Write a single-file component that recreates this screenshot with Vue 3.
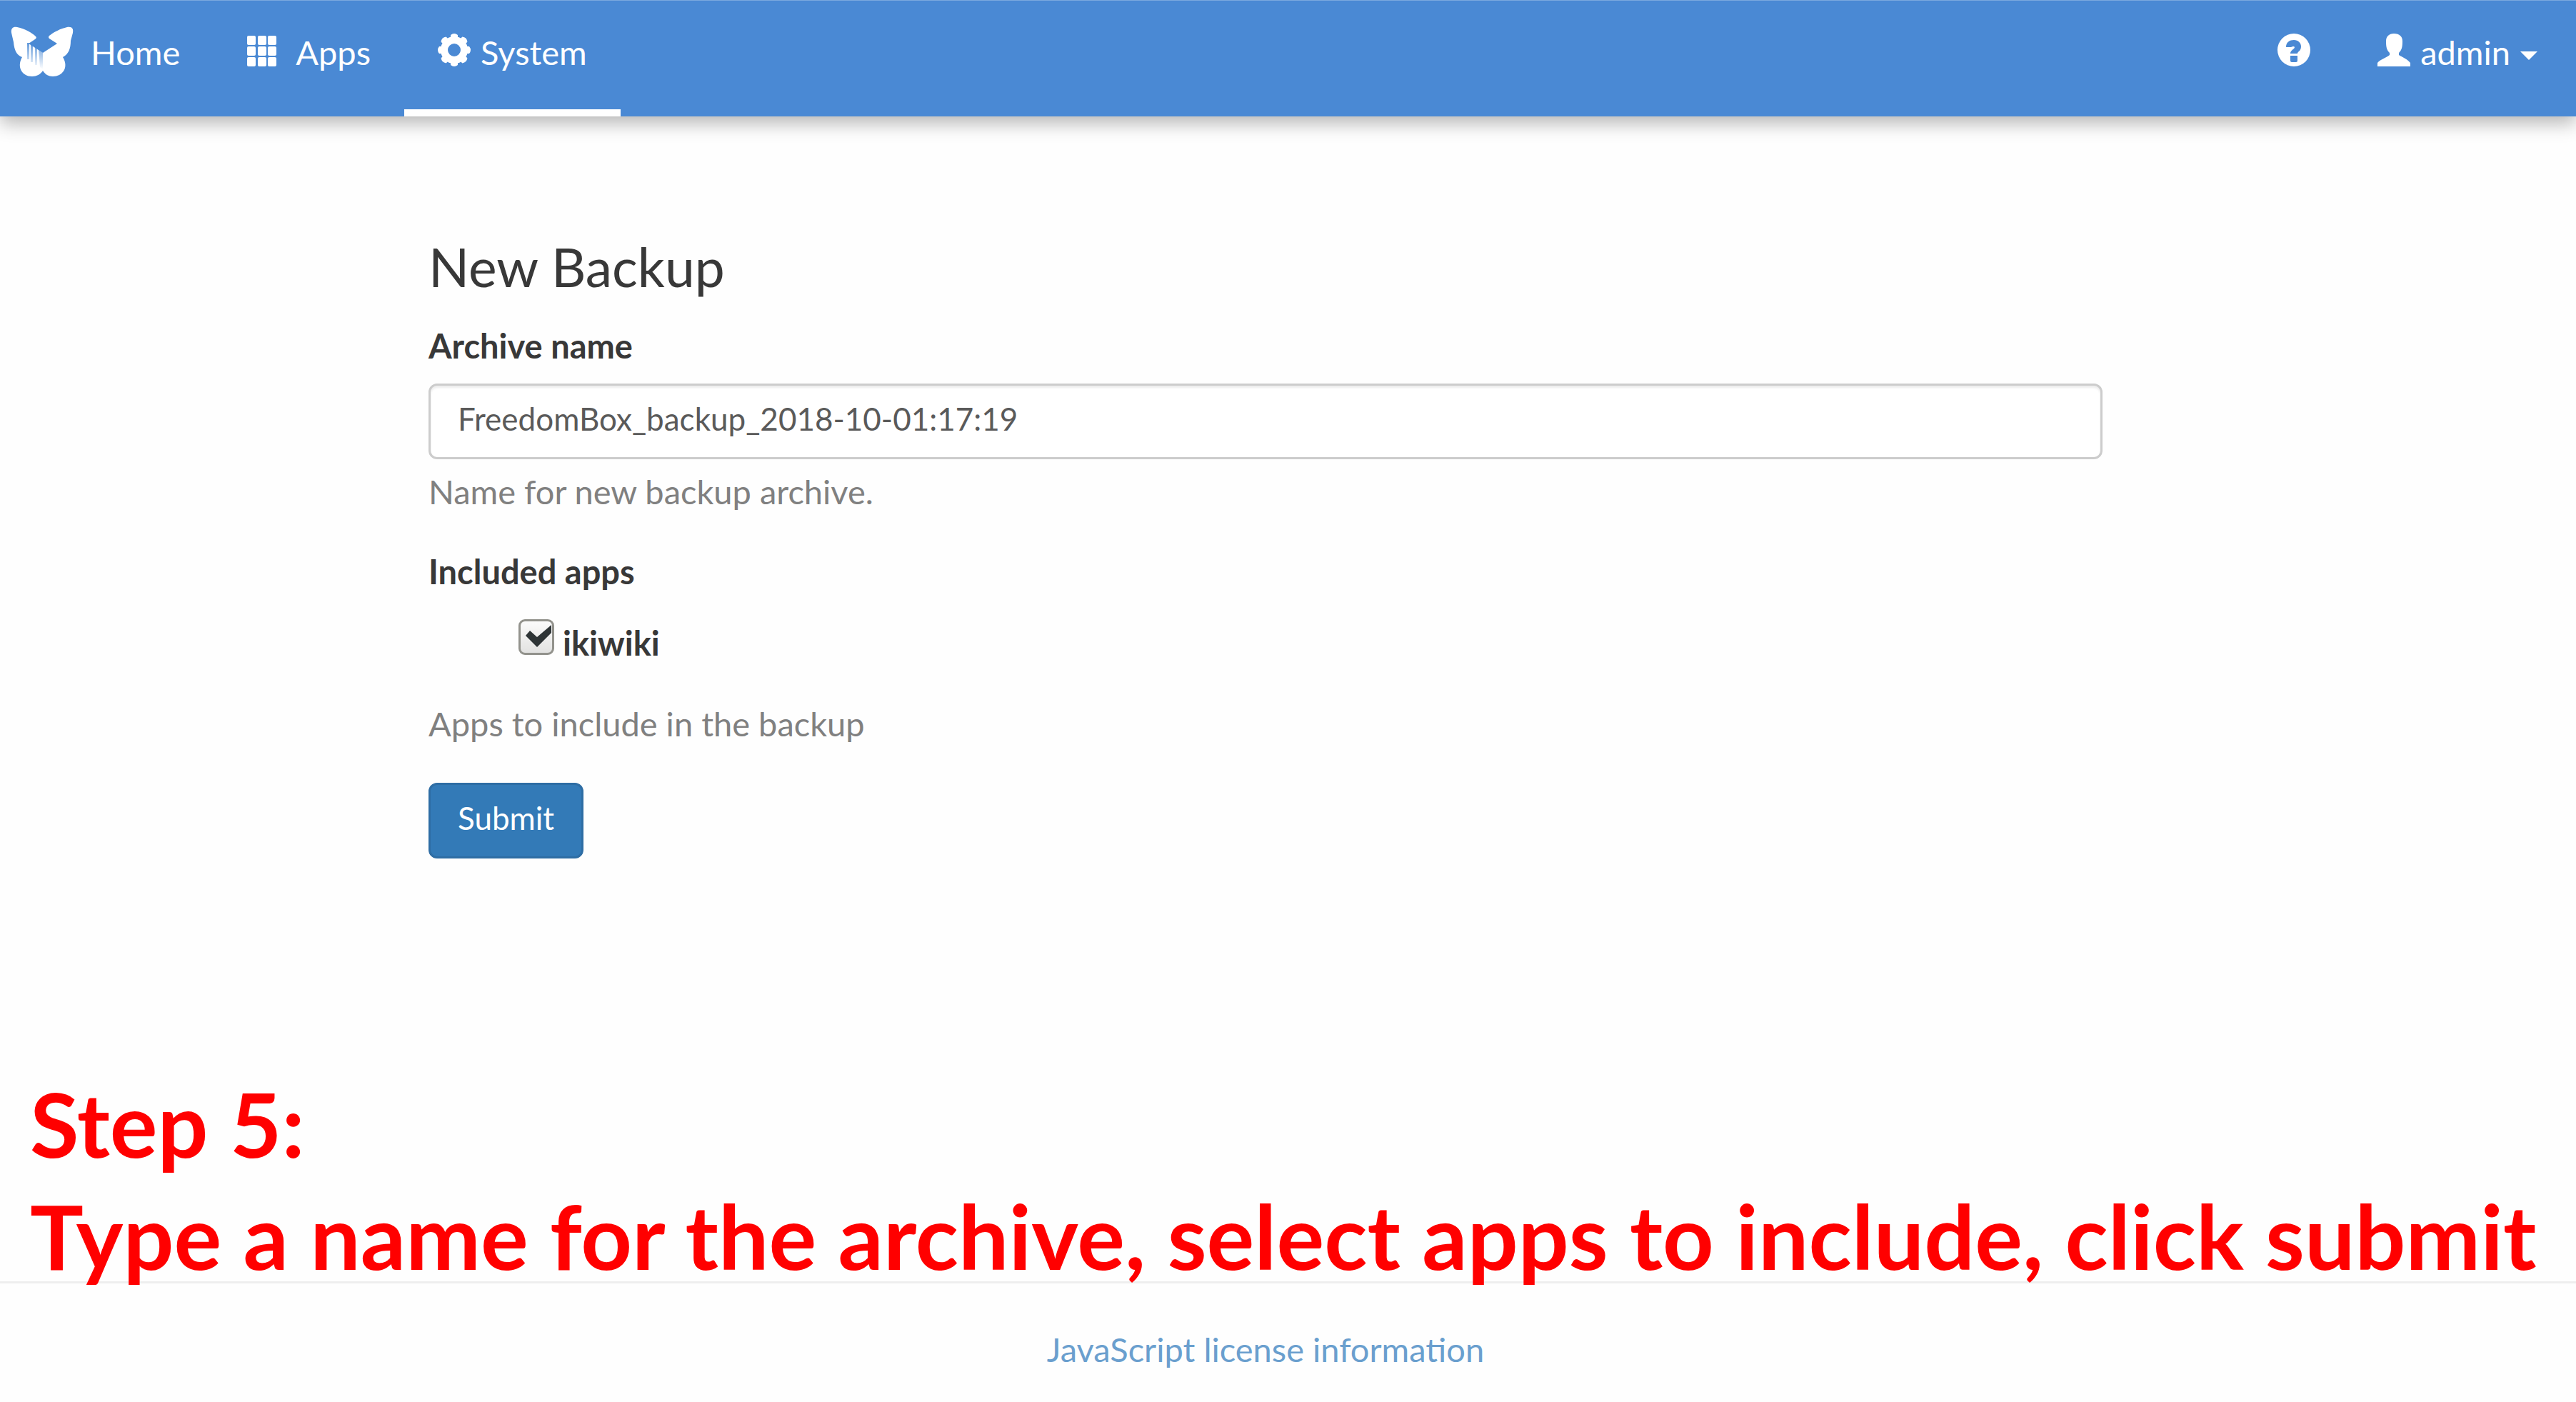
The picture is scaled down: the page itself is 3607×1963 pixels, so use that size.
<script setup>
import { ref } from 'vue'

const archiveName = ref('FreedomBox_backup_2018-10-01:17:19')
const apps = ref([{ id: 'ikiwiki', selected: true }])
const gearTeeth = [0, 45, 90, 135, 180, 225, 270, 315]
const gridCells = [3, 18, 33].flatMap((y) => [0, 15, 29].map((x) => ({ x, y })))
</script>

<template>
  <div class="page">
    <nav class="navbar" aria-label="Main">
      <a class="brand" href="#home">
        <svg class="logo" viewBox="0 0 88 72" aria-hidden="true">
          <defs>
            <linearGradient id="fade" x1="0" y1="0" x2="0" y2="1">
              <stop offset="0" stop-color="#4a89d4" stop-opacity="0.85" />
              <stop offset="1" stop-color="#4a89d4" stop-opacity="0" />
            </linearGradient>
          </defs>
          <path fill="#fff" d="M1 9C0 2 4 0 9 1C20 3 30 9 35 14Q37 16 34 18L25 24L45 37L65 24L54 17Q52 15 54 13C60 8 70 3 79 1C86 0 88 3 87 9L84 20C84 31 81 39 73 43C82 58 72 70 59 70C53 70 48 67 45 62C42 67 36 70 30 70C16 70 8 57 16 43C8 40 5 33 4 22Z" />
          <path fill="url(#fade)" d="M23 23H26V46H23ZM28 26H31V50H28ZM34 29L37 31V54H34ZM39 33L45 37V60L41 57Z" />
        </svg>
        <span>Home</span>
      </a>
      <a class="link" href="#apps">
        <svg class="icon grid-icon" viewBox="0 0 46 46" aria-hidden="true">
          <rect v-for="(c, i) in gridCells" :key="i" :x="c.x" :y="c.y" width="12" height="13" rx="2" fill="#fff" />
        </svg>
        <span>Apps</span>
      </a>
      <a class="link active" href="#system" aria-current="page">
        <svg class="icon" viewBox="0 0 46 46" aria-hidden="true">
          <circle cx="23" cy="23" r="14" fill="none" stroke="#fff" stroke-width="10" />
          <path v-for="a in gearTeeth" :key="a" fill="#fff" d="M15 9L18 5V2Q23-2 28 2V5L31 9Z" :transform="`rotate(${a} 23 23)`" />
        </svg>
        <span>System</span>
      </a>
      <a class="link push" href="#help" aria-label="Help">
        <svg class="icon" viewBox="0 0 46 46" aria-hidden="true">
          <circle cx="23" cy="23" r="23" fill="#fff" />
          <path fill="#4a89d4" d="M12 19C12 12 17 9 23 9C29 9 33 13 33 18C33 25 28 25 28 28H18C18 23 24 22 24 19Q23 17 19 19ZM18 31h10v7q0 2-2 2h-6q-2 0-2-2Z" />
        </svg>
      </a>
      <button class="link" type="button" aria-haspopup="true">
        <svg class="icon" viewBox="0 0 46 46" aria-hidden="true">
          <path fill="#fff" d="M23 0C31 0 35 4 35 11C35 19 34 23 30 27V30C35 33 42 36 46 41V46H0V41C4 36 12 34 17 30V27C13 23 12 19 12 11C12 4 16 0 23 0Z" />
        </svg>
        <span>admin</span>
        <svg class="caret" viewBox="0 0 24 12" aria-hidden="true"><path fill="#fff" d="M0 0H24L12 12Z" /></svg>
      </button>
    </nav>

    <main class="content">
      <div class="column">
        <h2>New Backup</h2>
        <form @submit.prevent>
          <label class="label" for="archive-name">Archive name</label>
          <input id="archive-name" v-model="archiveName" class="text" type="text" />
          <p class="help">Name for new backup archive.</p>
          <fieldset>
            <legend class="label">Included apps</legend>
            <label v-for="app in apps" :key="app.id" class="option">
              <span class="tick">
                <input v-model="app.selected" type="checkbox" />
                <svg v-if="app.selected" viewBox="0 0 50 50" aria-hidden="true">
                  <path fill="#2e3436" d="M10 23L16 16L26 25L46 8V19L26 39Z" />
                </svg>
              </span>
              <span>{{ app.id }}</span>
            </label>
          </fieldset>
          <p class="help apps-help">Apps to include in the backup</p>
          <button class="submit" type="submit">Submit</button>
        </form>
      </div>
    </main>

    <footer class="footer">
      <a href="#jslicense">JavaScript license information</a>
    </footer>

    <p class="step">Step 5:<br />Type a name for the archive, select apps to include, click submit</p>
  </div>
</template>

<style>
body {
  margin: 0;
  background: #fefefe;
}
</style>

<style scoped>
.page {
  position: relative;
  display: flex;
  flex-direction: column;
  min-height: 100vh;
  font-family: Lato, sans-serif;
  font-size: 47px;
  line-height: 66px;
  color: #383838;
}

.navbar {
  display: flex;
  box-sizing: border-box;
  height: 163px;
  padding-right: 7px;
  background: #4a89d4;
  border-top: 1px solid #7ba9df;
  box-shadow: 0 10px 24px rgba(0, 0, 0, 0.28);
}

.brand,
.link {
  display: flex;
  align-items: center;
  box-sizing: border-box;
  height: 162px;
  padding: 42px 47px 50px;
  border: 0 solid transparent;
  border-bottom-width: 10px;
  background: none;
  font: inherit;
  line-height: 60px;
  color: #fff;
  text-decoration: none;
  white-space: nowrap;
}

.brand {
  gap: 24px;
  padding-left: 15px;
}

.link {
  gap: 14px;
}

.active {
  border-bottom-color: #fff;
}

.push {
  margin-left: auto;
}

.logo {
  width: 88px;
  height: 72px;
}

.icon {
  width: 46px;
  height: 46px;
  margin-bottom: 6px;
}

.grid-icon {
  margin-right: 8px;
}

.caret {
  width: 24px;
  height: 12px;
  margin-top: 10px;
}

.content {
  flex: 1;
  padding: 168px 63px 0 0;
}

.column {
  max-width: 2344px;
  margin: 0 auto;
}

h2 {
  margin: 0 0 36px;
  font-size: 75px;
  font-weight: 400;
  line-height: 84px;
}

.label {
  display: block;
  padding: 0;
  font-weight: 700;
}

.text {
  display: block;
  box-sizing: border-box;
  width: 100%;
  height: 106px;
  margin: 20px 0 12px;
  padding: 0 38px 8px;
  border: 3px solid #ccc;
  border-radius: 12px;
  background: #fff;
  box-shadow: inset 0 3px 3px rgba(0, 0, 0, 0.075);
  font: inherit;
  font-size: 44px;
  color: #5a5a5a;
}

.help {
  margin: 0;
  color: #808080;
}

fieldset {
  margin: 46px 0 0;
  padding: 0;
  border: 0;
}

.option {
  display: flex;
  gap: 12px;
  margin: 34px 0 0 126px;
  font-weight: 700;
}

.tick {
  position: relative;
  width: 50px;
  height: 50px;
}

.tick input {
  display: block;
  box-sizing: border-box;
  width: 50px;
  height: 50px;
  margin: 0;
  appearance: none;
  border: 3px solid #92928c;
  border-radius: 9px;
  background: linear-gradient(#fbfbfb, #e2e2e1);
}

.tick svg {
  position: absolute;
  inset: 0;
  pointer-events: none;
}

.apps-help {
  margin: 47px 0 50px;
}

.submit {
  height: 106px;
  padding: 0 38px 8px;
  border: 3px solid #2e6da4;
  border-radius: 12px;
  background: #337ab7;
  font: inherit;
  font-size: 44px;
  color: #fff;
}

.footer {
  padding: 59px 63px 41px 0;
  border-top: 3px solid #eee;
  text-align: center;
}

.footer a {
  color: #6a9fce;
  text-decoration: none;
}

.step {
  position: absolute;
  bottom: 154px;
  left: 42px;
  margin: 0;
  font-size: 125px;
  font-weight: 700;
  line-height: 157px;
  color: #f00;
  white-space: nowrap;
}
</style>
